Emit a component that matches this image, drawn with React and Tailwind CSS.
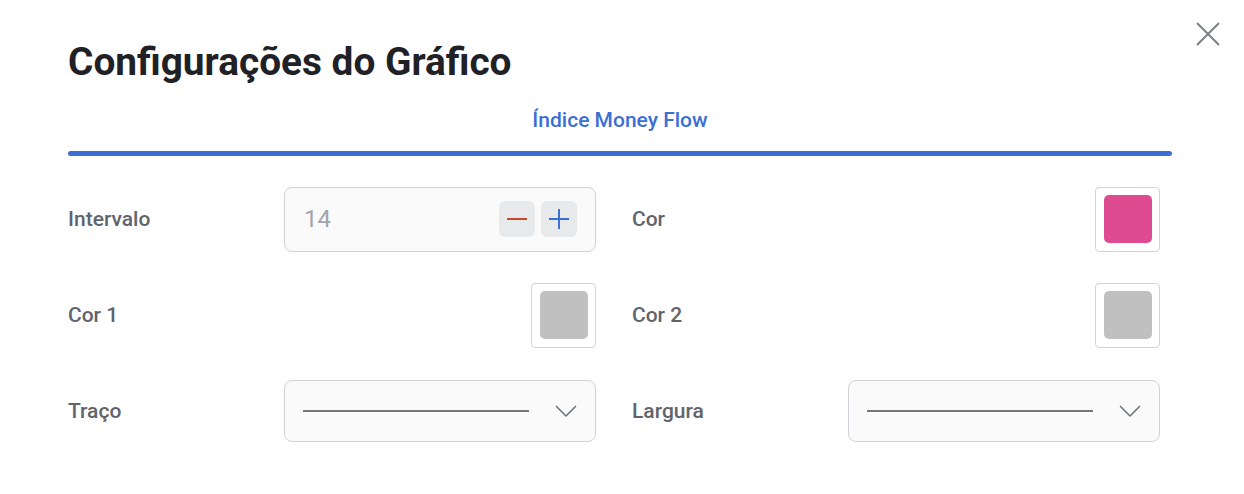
export default function App() {
  const Label = ({ children }) => (
    <span className="w-[216px] shrink-0 pt-[2px] text-[21px] font-medium text-[#60646c]">{children}</span>
  )

  const Swatch = ({ color }) => (
    <div className="ml-auto w-[65px] h-[65px] rounded-[4px] border border-[#d4d4d6] flex items-center justify-center">
      <div className="w-[48px] h-[48px] rounded-[5px]" style={{ backgroundColor: color }}></div>
    </div>
  )

  const LineSelect = () => (
    <div className="w-[312px] h-[62px] rounded-[8px] border border-[#d0d2d6] bg-[#fafafa] flex items-center pl-[18px] pr-[18px]">
      <div className="w-[226px] h-[2px] bg-[#777777]"></div>
      <svg className="ml-auto" width="22" height="13" viewBox="0 0 22 13" fill="none">
        <path d="M1.5 1.5 L11 11 L20.5 1.5" stroke="#70747c" strokeWidth="1.6" strokeLinecap="round" strokeLinejoin="round" />
      </svg>
    </div>
  )

  return (
    <div className="w-[1244px] h-[494px] bg-white relative font-['Roboto',sans-serif]">
      <button className="absolute left-[1196px] top-[22px] w-[24px] h-[24px]">
        <svg width="24" height="24" viewBox="0 0 24 24" fill="none">
          <path d="M1 1 L23 23 M23 1 L1 23" stroke="#7c8089" strokeWidth="2" />
        </svg>
      </button>

      <div className="pl-[68px] w-[1172px] pt-[42px]">
        <h1 className="text-[38.8px] leading-[40px] font-bold text-[#1f2125]">
          Configurações do Gráfico
        </h1>

        <div className="mt-[24px] text-center text-[21px] leading-[28px] font-medium text-[#3b6fd4]">
          Índice Money Flow
        </div>
        <div className="mt-[17px] h-[5px] rounded-full bg-[#3b6fd4]"></div>

        <div className="mt-[15px] grid grid-cols-[528px_528px] gap-x-[36px]">
          <div className="h-[96px] flex items-center">
            <Label>Intervalo</Label>
            <div className="w-[312px] h-[65px] rounded-[8px] border border-[#d0d2d6] bg-[#fafafa] flex items-center pl-[19px] pr-[18px]">
              <span className="text-[24px] text-[#a0a4ab]">14</span>
              <div className="ml-auto flex gap-[6px]">
                <button className="w-[36px] h-[36px] rounded-[6px] bg-[#e8e9eb] flex items-center justify-center">
                  <span className="block w-[20px] h-[2px] bg-[#c9472b]"></span>
                </button>
                <button className="w-[36px] h-[36px] rounded-[6px] bg-[#e8e9eb] flex items-center justify-center">
                  <svg width="20" height="20" viewBox="0 0 20 20">
                    <path d="M0 10 H20 M10 0 V20" stroke="#3b6fd4" strokeWidth="2" />
                  </svg>
                </button>
              </div>
            </div>
          </div>
          <div className="h-[96px] flex items-center">
            <Label>Cor</Label>
            <Swatch color="#de4b91" />
          </div>

          <div className="h-[96px] flex items-center">
            <Label>Cor 1</Label>
            <Swatch color="#c0c0c0" />
          </div>
          <div className="h-[96px] flex items-center">
            <Label>Cor 2</Label>
            <Swatch color="#c0c0c0" />
          </div>

          <div className="h-[96px] flex items-center">
            <Label>Traço</Label>
            <LineSelect />
          </div>
          <div className="h-[96px] flex items-center">
            <Label>Largura</Label>
            <LineSelect />
          </div>
        </div>
      </div>
    </div>
  )
}
